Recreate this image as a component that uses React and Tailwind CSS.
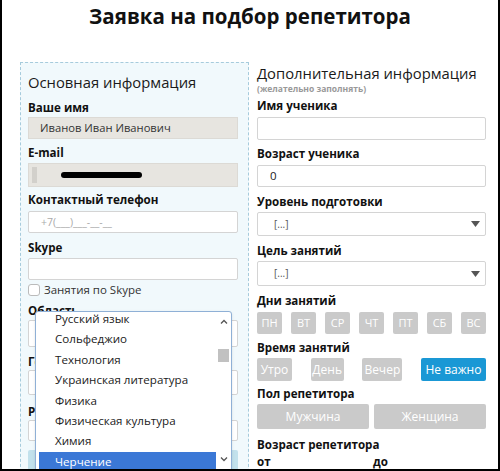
import React from "react";

const font = { fontFamily: '"Open Sans", "Noto Sans", sans-serif' };

function Label({ children, className = "" }) {
  return (
    <div className={"text-[11.6px] leading-[16px] font-bold text-[#111] whitespace-nowrap " + className}>{children}</div>
  );
}

function Arrow() {
  return (
    <svg width="9" height="6" viewBox="0 0 9 6" className="absolute right-[5px] top-1/2 -translate-y-1/2">
      <path d="M0 0 H9 L4.5 6 Z" fill="#555" />
    </svg>
  );
}

function Chevron({ up }) {
  return (
    <svg width="8" height="5" viewBox="0 0 8 5">
      <path d={up ? "M1 4.5 L4 1.5 L7 4.5" : "M1 0.5 L4 3.5 L7 0.5"} stroke="#555" strokeWidth="1.3" fill="none" />
    </svg>
  );
}

export default function App() {
  const subjects = [
    "Русский язык",
    "Сольфеджио",
    "Технология",
    "Украинская литература",
    "Физика",
    "Физическая культура",
    "Химия",
    "Черчение",
  ];
  const days = ["ПН", "ВТ", "СР", "ЧТ", "ПТ", "СБ", "ВС"];
  return (
    <div
      style={font}
      className="relative w-[500px] h-[471px] overflow-hidden bg-white border-l-2 border-r-2 border-b-2 border-black"
    >
      <h1 className="text-center text-[20.5px] leading-[30px] font-bold text-[#111] pt-[1px]">
        Заявка на подбор репетитора
      </h1>
      <div className="flex mt-[31px]">
        {/* left panel */}
        <div className="relative ml-[18px] w-[229px] h-[420px] border border-dashed border-[#a6cbdc] bg-[#f1f9fc] pl-[7px] pr-[10px] pt-[8px]">
          <div className="text-[14.8px] leading-[22px] text-[#1a1a1a] whitespace-nowrap">Основная информация</div>
          <Label className="mt-[7px]">Ваше имя</Label>
          <div className="mt-[1px] h-[22px] bg-[#e7e5e0] border border-[#dcdad5] text-[11.2px] leading-[20px] pl-[11px] text-[#333]">
            Иванов Иван Иванович
          </div>
          <Label className="mt-[6px]">E-mail</Label>
          <div className="mt-[2px] h-[24px] bg-[#e7e5e0] border border-[#dcdad5] relative">
            <div className="absolute left-[3px] top-[3px] bottom-[3px] w-[5px] bg-[#d2d0cb]" />
            <div className="absolute left-[32px] top-[8px] w-[81px] h-[6px] rounded-full bg-black" />
          </div>
          <Label className="mt-[5px]">Контактный телефон</Label>
          <div className="mt-[3px] h-[22px] bg-white border border-[#d4d4d4] rounded-[2px] text-[10.5px] leading-[20px] pl-[12px] text-[#aaa]">
            +7(___)___-__-__
          </div>
          <Label className="mt-[7px]">Skype</Label>
          <div className="mt-[2px] h-[22px] bg-white border border-[#d4d4d4] rounded-[2px]" />
          <div className="flex items-center mt-[3px] h-[14px]">
            <div className="w-[12px] h-[12px] border border-[#bbb] rounded-[3px] bg-white" />
            <span className="ml-[4px] text-[11.5px] text-[#333]">Занятия по Skype</span>
          </div>
          <Label className="mt-[6px]">Область</Label>
          <div className="mt-[1px] h-[27px] bg-white border border-[#d4d4d4] rounded-[2px] relative">
            <Arrow />
          </div>
          <Label className="mt-[7px]">Город</Label>
          <div className="h-[25px] bg-white border border-[#d4d4d4] rounded-[2px] relative">
            <Arrow />
          </div>
          <Label className="mt-[9px]">Район</Label>
          <div className="h-[21px] bg-white border border-[#d4d4d4] rounded-[2px]" />
          <div className="mt-[9px] h-[30px] bg-[#c2e1ec] rounded-[2px]" />

          {/* dropdown overlay */}
          <div className="absolute left-[14px] top-[248px] w-[197px] h-[175px] bg-white border border-[#8fb0d6] rounded-t-[3px] shadow-sm flex overflow-hidden">
            <div className="flex-1 pl-[3px] -mt-[3px]">
              {subjects.map((s, i) => (
                <div
                  key={s}
                  className={
                    "h-[20.4px] text-[11.6px] leading-[20.4px] pl-[16px] whitespace-nowrap " +
                    (i === subjects.length - 1 ? "bg-[#3b78d6] text-white" : "text-[#222]")
                  }
                >
                  {s}
                </div>
              ))}
            </div>
            <div className="w-[15px] flex flex-col items-center pt-[7px]">
              <Chevron up />
              <div className="mt-[25px] w-[11px] h-[13px] bg-[#c1c1c1]" />
              <div className="mt-[95px]">
                <Chevron />
              </div>
            </div>
          </div>
        </div>

        {/* right column */}
        <div className="ml-[8px] w-[229px]">
          <div className="text-[14.8px] leading-[20px] text-[#1a1a1a] mt-[1px] whitespace-nowrap">Дополнительная информация</div>
          <div className="text-[8.5px] leading-[10px] font-bold text-[#999] mt-[1px] whitespace-nowrap">(желательно заполнять)</div>
          <Label className="mt-[4px]">Имя ученика</Label>
          <div className="mt-[3px] h-[23px] bg-white border border-[#d4d4d4] rounded-[2px]" />
          <Label className="mt-[6px]">Возраст ученика</Label>
          <div className="mt-[3px] h-[22px] bg-white border border-[#d4d4d4] rounded-[2px] text-[11.5px] leading-[20px] pl-[12px] text-[#222]">
            0
          </div>
          <Label className="mt-[7px]">Уровень подготовки</Label>
          <div className="mt-[2px] h-[24px] bg-white border border-[#d4d4d4] rounded-[2px] relative text-[10px] leading-[22px] pl-[16px] text-[#555]">
            [...]
            <Arrow />
          </div>
          <Label className="mt-[7px]">Цель занятий</Label>
          <div className="mt-[2px] h-[25px] bg-white border border-[#d4d4d4] rounded-[2px] relative text-[10px] leading-[23px] pl-[16px] text-[#555]">
            [...]
            <Arrow />
          </div>
          <Label className="mt-[7px]">Дни занятий</Label>
          <div className="mt-[3px] flex justify-between">
            {days.map((d) => (
              <div
                key={d}
                className="w-[25px] h-[22px] bg-[#cacaca] rounded-[2px] text-white text-[11px] leading-[22px] text-center"
              >
                {d}
              </div>
            ))}
          </div>
          <Label className="mt-[6px]">Время занятий</Label>
          <div className="mt-[2px] flex justify-between">
            {[
              ["Утро", "w-[35px]"],
              ["День", "w-[33px]"],
              ["Вечер", "w-[40px]"],
            ].map(([t, w]) => (
              <div
                key={t}
                className={w + " h-[23px] bg-[#cacaca] rounded-[2px] text-white text-[12px] leading-[23px] text-center"}
              >
                {t}
              </div>
            ))}
            <div className="w-[65px] h-[23px] bg-[#1a98d5] rounded-[2px] text-white text-[12px] leading-[23px] text-center">
              Не важно
            </div>
          </div>
          <Label className="mt-[5px]">Пол репетитора</Label>
          <div className="mt-[2px] flex gap-[5px]">
            <div className="flex-1 h-[25px] bg-[#cacaca] rounded-[2px] text-white text-[12px] leading-[25px] text-center">
              Мужчина
            </div>
            <div className="flex-1 h-[25px] bg-[#cacaca] rounded-[2px] text-white text-[12px] leading-[25px] text-center">
              Женщина
            </div>
          </div>
          <Label className="mt-[8px]">Возраст репетитора</Label>
          <div className="flex mt-[1px]">
            <Label className="w-[116px]">от</Label>
            <Label>до</Label>
          </div>
        </div>
      </div>
    </div>
  );
}
